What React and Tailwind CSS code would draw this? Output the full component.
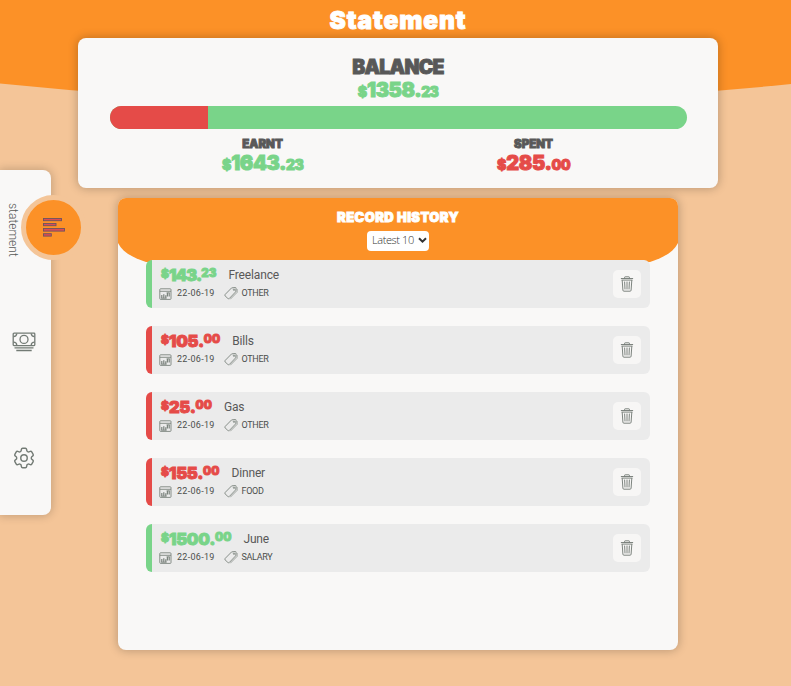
import React from "react";
import { HiOutlineCog6Tooth } from "react-icons/hi2";

const records = [
  { whole: "143.", cents: "23", name: "Freelance", tag: "OTHER", income: true },
  { whole: "105.", cents: "00", name: "Bills", tag: "OTHER", income: false },
  { whole: "25.", cents: "00", name: "Gas", tag: "OTHER", income: false },
  { whole: "155.", cents: "00", name: "Dinner", tag: "FOOD", income: false },
  { whole: "1500.", cents: "00", name: "June", tag: "SALARY", income: true },
];

const heavy = "font-['Inter',sans-serif] font-black whitespace-nowrap [-webkit-text-stroke:0.9px_currentColor]";

function Total({ whole, cents, color }) {
  return (
    <div className={`${heavy} ${color} flex h-[22px] items-baseline leading-[22px]`}>
      <span className="text-[14px]">$</span>
      <span className="text-[20px] tracking-[-0.45px]">{whole}</span>
      <span className="text-[14px] tracking-[-0.7px]">{cents}</span>
    </div>
  );
}

function StatementIcon() {
  return (
    <svg width="24" height="20" viewBox="0 0 24 20" fill="#dc4b55" stroke="#6b5560" strokeWidth="0.9">
      <rect x="1.5" y="1.5" width="18" height="2.2" />
      <rect x="1.5" y="6.5" width="12.5" height="2.2" />
      <rect x="1.5" y="11.5" width="21" height="2.6" />
      <rect x="1.5" y="16.7" width="7.8" height="2.4" />
    </svg>
  );
}

function MoneyIcon() {
  return (
    <svg width="24" height="20" viewBox="0 0 24 20" fill="none" stroke="#737b75" strokeWidth="1.3">
      <rect x="1.2" y="1.2" width="21.6" height="12.4" rx="0.8" />
      <circle cx="12" cy="7.4" r="4" />
      <path d="M1.5 4.6Q4.6 4.6 4.8 1.5M22.5 4.6Q19.4 4.6 19.2 1.5M1.5 10.2Q4.6 10.2 4.8 13.3M22.5 10.2Q19.4 10.2 19.2 13.3" />
      <path d="M2.5 15.9H21.5M4.3 18.5H19.7" />
    </svg>
  );
}

function CalendarIcon() {
  return (
    <svg width="13" height="12" viewBox="0 0 13 12" fill="none" stroke="#7b837d" strokeWidth="0.9">
      <rect x="0.8" y="0.8" width="11.2" height="10.6" rx="0.8" />
      <path d="M0.8 3.3H12" />
      <path d="M2.8 10.2V7M4.8 10.2V6.3M6.8 10.2V7.2M8.4 8.4V5M10.2 8.4V5" strokeWidth="1.2" />
      <path d="M2.2 10.2H7.6M7.6 4.8H10.8" />
    </svg>
  );
}

function TagIcon() {
  return (
    <svg width="14" height="13" viewBox="0 0 14 13" fill="none" stroke="#7b837d" strokeWidth="0.9" strokeLinejoin="round">
      <path d="M7.6 0.9L11.3 0.5Q12.1 0.5 12.1 1.3L11.7 4.8L5.4 11.4Q4.6 12.1 3.8 11.4L1.1 8.9Q0.5 8.1 1.2 7.4Z" />
      <path d="M13.1 2L13.1 5.4L6.2 12.3" strokeWidth="0.7" />
      <circle cx="10" cy="2.7" r="0.7" />
    </svg>
  );
}

function TrashIcon() {
  return (
    <svg width="14" height="16" viewBox="0 0 14 16" fill="none" stroke="#6f7772" strokeWidth="0.9">
      <path d="M0.9 2.5H13.1M4.6 2.3V1.3Q4.6 0.8 5.2 0.8H8.8Q9.4 0.8 9.4 1.3V2.3M1.5 4.1H12.5" />
      <path d="M2.2 4.2L2.9 14.2Q3 15.2 3.9 15.2H10.1Q11 15.2 11.1 14.2L11.8 4.2" />
      <path d="M4.6 5.6L5 13.4M7 5.6V13.4M9.4 5.6L9 13.4" />
    </svg>
  );
}

function Record({ record }) {
  const { whole, cents, name, tag, income } = record;
  return (
    <li className={`flex h-12 items-center justify-between rounded-[6px] border-l-6 bg-[#ebebeb] pr-[9px] pl-[7px] ${income ? "border-[#79d489]" : "border-[#e54b48]"}`}>
      <div className="flex flex-col">
        <div className="mb-[3px] flex h-[17px] items-center pl-[2px]">
          <div className={`${heavy} ${income ? "text-[#79d489]" : "text-[#e54b48]"} flex items-start leading-[18px]`}>
            <span className="text-[12px] leading-[15px]">$</span>
            <span className={`text-[16.5px] ${name === "Freelance" ? "tracking-[-0.9px]" : "tracking-[-0.3px]"}`}>{whole}</span>
            <span className="text-[11.5px] leading-[14px]">{cents}</span>
          </div>
          <span className="ml-3 font-['Roboto',sans-serif] text-[12px] tracking-[-0.15px] text-[#585858]">{name}</span>
        </div>
        <div className="flex h-[14px] items-center font-['Roboto',sans-serif] text-[9px] text-[#4c4f4d]">
          <CalendarIcon />
          <span className="ml-[5px] w-[47px] tracking-[0.3px]">22-06-19</span>
          <TagIcon />
          <span className="ml-[3.5px] tracking-[-0.3px]">{tag}</span>
        </div>
      </div>
      <button className="flex size-7 items-center justify-center rounded-[5px] bg-[#f7f6f5]">
        <TrashIcon />
      </button>
    </li>
  );
}

export default function App() {
  return (
    <div className="relative flex h-[686px] w-[791px] flex-col items-center overflow-hidden bg-[#f4c598] pl-[5px]">
      <svg className="absolute top-0 left-0" width="791" height="110" viewBox="0 0 791 110">
        <path d="M0 0H791V84Q395 124 0 83.5Z" fill="#fc9127" />
      </svg>

      <h1 className={`${heavy} relative mt-1 h-[34px] text-[24.5px] leading-[32px] tracking-[0.9px] text-white`}>Statement</h1>

      <section className="relative flex h-[150px] w-[640px] shrink-0 flex-col items-center rounded-[8px] bg-[#f9f8f7] pt-[19px] shadow-[0_0_10px_1px_rgba(0,0,0,0.22)]">
        <h2 className={`${heavy} h-[22px] text-[19.5px] leading-[20px] tracking-[-0.7px] text-[#585858]`}>BALANCE</h2>
        <Total whole="1358." cents="23" color="text-[#79d489]" />
        <div className="mt-[4.5px] flex h-[23px] w-[577px] shrink-0 overflow-hidden rounded-[12px] bg-[#79d489]">
          <div className="w-[17.1%] bg-[#e54b48]" />
        </div>
        <div className="mt-[7.5px] grid w-[542px] grid-cols-2 justify-items-center">
          <div className="flex flex-col items-center">
            <h3 className={`${heavy} h-[16px] text-[11.5px] leading-[17px] text-[#585858]`}>EARNT</h3>
            <Total whole="1643." cents="23" color="text-[#79d489]" />
          </div>
          <div className="flex flex-col items-center">
            <h3 className={`${heavy} h-[16px] text-[11.5px] leading-[17px] text-[#585858]`}>SPENT</h3>
            <Total whole="285." cents="00" color="text-[#e54b48]" />
          </div>
        </div>
      </section>

      <section className="relative mt-[9.5px] flex h-[452px] w-[560px] shrink-0 flex-col rounded-[8px] bg-[#f9f8f7] shadow-[0_0_10px_1px_rgba(0,0,0,0.22)]">
        <svg className="absolute top-0 left-0 rounded-t-[8px]" width="560" height="74" viewBox="0 0 560 74">
          <path d="M0 0H560V45C555 55 544 60 532 64Q280 82 28 64C16 60 5 55 0 45Z" fill="#fc9127" />
        </svg>
        <div className="relative flex h-[62px] shrink-0 flex-col items-center pt-[10px]">
          <h2 className={`${heavy} h-[23px] text-[13px] leading-[18px] tracking-[0.4px] text-white`}>RECORD HISTORY</h2>
          <div className="flex h-[20px] w-[62px] shrink-0 items-center justify-between rounded-[4px] bg-white pr-[2px] pl-[5px] font-['Open_Sans',sans-serif] text-[11px] font-light tracking-[-0.4px] whitespace-nowrap text-[#333]">
            Latest 10
            <svg width="9" height="7" viewBox="0 0 9 7" fill="none" stroke="#333" strokeWidth="2">
              <path d="M1 1.2L4.5 4.7L8 1.2" />
            </svg>
          </div>
        </div>
        <ul className="relative mx-7 flex flex-col gap-[18px]">
          {records.map((record) => (
            <Record key={record.name} record={record} />
          ))}
        </ul>
      </section>

      <nav className="absolute top-[170px] left-0 flex h-[345px] w-[50.5px] flex-col rounded-r-[8px] bg-[#f9f8f7] shadow-[0_0_10px_1px_rgba(0,0,0,0.2)]">
        <div className="mt-[24.5px] flex h-[65px] w-[86px] items-center">
          <span className="mt-[5px] ml-[3.5px] w-[17.5px] shrink-0 font-['Roboto',sans-serif] text-[12px] leading-[17px] font-light text-[#585858] [writing-mode:vertical-rl]">statement</span>
          <div className="flex size-[65px] shrink-0 items-center justify-center rounded-full border-5 border-[#f4c598] bg-[#fc9127]">
            <StatementIcon />
          </div>
        </div>
        <div className="mt-[72.5px] ml-[12px] h-5">
          <MoneyIcon />
        </div>
        <HiOutlineCog6Tooth className="mt-[92.5px] ml-[11px] size-[26px] shrink-0 text-[#737b75] [stroke-width:1.3]" />
      </nav>
    </div>
  );
}
